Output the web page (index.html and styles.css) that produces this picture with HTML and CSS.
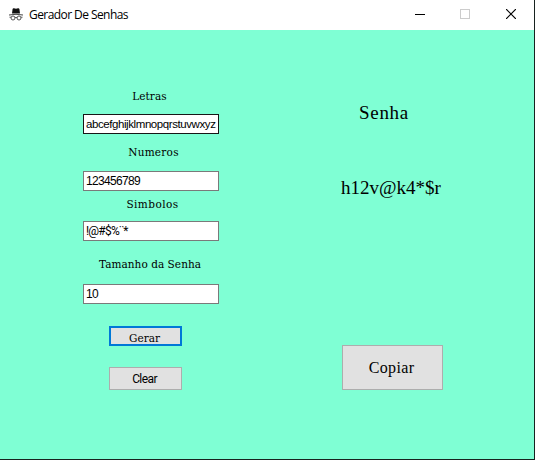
FILE: index.html
```html
<!DOCTYPE html>
<html lang="pt">
<head>
<meta charset="utf-8">
<title>Gerador De Senhas</title>
<link rel="stylesheet" href="styles.css">
</head>
<body>
<div class="window">
  <header class="titlebar">
    <svg class="app-icon" width="14" height="14" viewBox="0 0 14 14">
      <path d="M3 5.6 3.6 1Q4 0 5 .3L7 .7 9 .3Q10 0 10.4 1L11 5.6Z" fill="#111"/>
      <path d="M0 7Q7 5.6 14 7" fill="none" stroke="#444" stroke-width="1"/>
      <g fill="none" stroke="#555" stroke-width="1"><circle cx="4" cy="10" r="2"/><circle cx="10" cy="10" r="2"/><path d="M6 9.6Q7 9 8 9.6M.5 9.2H2M12 9.2h1.5"/></g>
    </svg>
    <span class="title">Gerador De Senhas</span>
    <div class="controls">
      <svg width="10" height="10"><path d="M0 5.5H10" stroke="#000"/></svg>
      <svg class="maximize" width="10" height="10"><rect x=".5" y=".5" width="9" height="9" fill="none" stroke="#ccc"/></svg>
      <svg width="10" height="10"><path d="M0 0 10 10M10 0 0 10" stroke="#000" stroke-width="1.2"/></svg>
    </div>
  </header>
  <main class="content">
    <section class="form">
      <label class="label letters" for="letters">Letras</label>
      <input class="field focused" id="letters" value="abcefghijklmnopqrstuvwxyz">
      <label class="label numbers" for="numbers">Numeros</label>
      <input class="field" id="numbers" value="123456789">
      <label class="label symbols" for="symbols">Simbolos</label>
      <input class="field marks" id="symbols" value="!@#$%¨*">
      <label class="label size" for="size">Tamanho da Senha</label>
      <input class="field" id="size" value="10">
      <button class="button generate">Gerar</button>
      <button class="button clear">Clear</button>
    </section>
    <section class="result">
      <div class="heading">Senha</div>
      <div class="password">h12v@k4*$r</div>
      <button class="button copy">Copiar</button>
    </section>
  </main>
</div>
</body>
</html>
```
FILE: styles.css
```css
* { box-sizing: border-box; }
body { margin: 0; background: #17221f; overflow: hidden; }
.window { width: 534px; height: 459px; background: #7fffd4; color: #000; }
.titlebar { height: 30px; display: flex; align-items: center; background: #fff; padding: 0 18px 0 9px; }
.app-icon { margin-top: -1px; }
.title { margin-left: 6px; font: 12px/16px "Open Sans", sans-serif; letter-spacing: -0.57px; white-space: nowrap; }
.controls { display: flex; gap: 35px; margin-left: auto; margin-top: -2px; }
.controls svg { display: block; }
.controls .maximize { margin-right: 1px; }
.content { display: flex; padding-left: 83px; }
.form { width: 136px; display: flex; flex-direction: column; align-items: center; }
.label { height: 16px; font: 10.5px/16px "DejaVu Serif", serif; white-space: nowrap; }
.letters { margin-top: 58px; padding-right: 3px; letter-spacing: 0.1px; }
.numbers { margin-top: 10px; padding-left: 5px; letter-spacing: 0.25px; }
.symbols { margin-top: 5px; padding-left: 3px; letter-spacing: 0.45px; }
.size { margin-top: 15px; padding-right: 2px; letter-spacing: 0.05px; }
.field { width: 136px; height: 20px; border: 1px solid #7a7a7a; border-radius: 0; background: #fff; padding: 0 0 0 2px; outline: none; color: #000; font: 12px "Liberation Sans", sans-serif; letter-spacing: -0.67px; }
.focused { margin-top: 10px; border-color: #171717; font-size: 11.5px; letter-spacing: -0.42px; }
.marks { font-family: Roboto, sans-serif; letter-spacing: -0.75px; }
.numbers + .field { margin-top: 11px; }
.symbols + .field { margin-top: 9px; }
.size + .field { margin-top: 12px; }
.button { border: 1px solid #adadad; border-radius: 0; background: #e1e1e1; color: #000; padding: 0; width: 73px; }
.generate { align-self: flex-start; height: 20px; margin: 22px 0 0 26px; padding: 3px 2px 0 0; border: 2px solid #0078d7; font: 10.5px/14px "DejaVu Serif", serif; }
.clear { align-self: flex-start; height: 23px; margin: 21px 0 0 26px; padding-right: 2px; font: 12px Roboto, sans-serif; letter-spacing: -0.6px; }
.result { margin-left: 122px; width: 103px; }
.heading, .password { font: 19px/24px "Palatino Linotype", Palatino, "Liberation Serif", serif; white-space: nowrap; }
.heading { margin: 71px 0 0 18px; letter-spacing: 0.7px; }
.password { margin-top: 51px; }
.copy { display: block; width: 101px; height: 45px; margin: 145px 0 0 1px; padding-right: 2px; font: 16px "Palatino Linotype", Palatino, "Liberation Serif", serif; letter-spacing: 0.35px; }
```
